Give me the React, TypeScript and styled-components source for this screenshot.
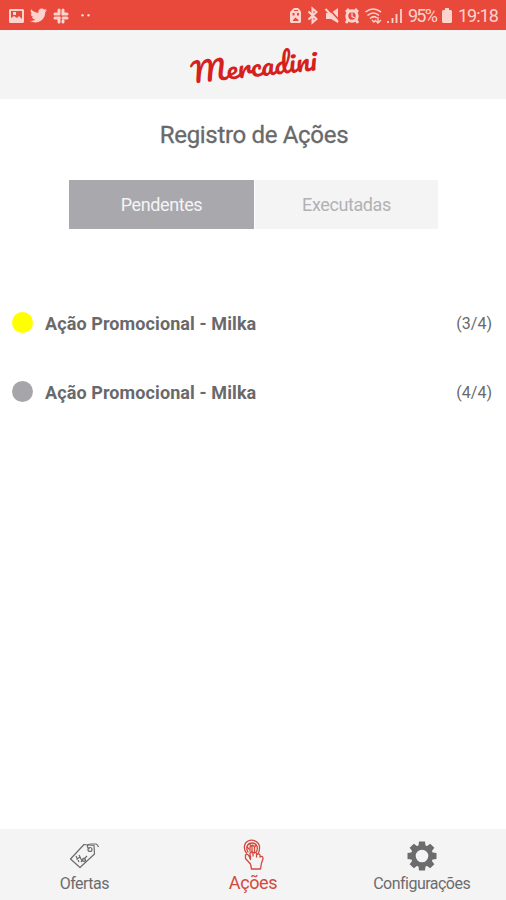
import React from "react";
import styled, { createGlobalStyle } from "styled-components";
import { FaTwitter } from "react-icons/fa";

const Global = createGlobalStyle`
  * { box-sizing: border-box; }
  body { margin: 0; background: #fff; }
`;

const Screen = styled.div`
  width: 506px;
  height: 900px;
  display: flex;
  flex-direction: column;
  background: #fff;
  color: #69696b;
  font-family: Roboto, "Liberation Sans", sans-serif;
  overflow: hidden;
`;

const StatusBar = styled.div`
  height: 30px;
  flex: none;
  display: flex;
  justify-content: space-between;
  background: #e8493b;
  color: #fcd3cd;
  padding: 0 9px;
`;

const StatusGroup = styled.div<{ $gap: number }>`
  display: flex;
  align-items: center;
  gap: ${(p) => p.$gap}px;
  padding-top: 1px;
  svg { display: block; flex: none; }
`;

const StatusText = styled.span<{ $width: number; $spacing: number }>`
  width: ${(p) => p.$width}px;
  font-size: 18px;
  line-height: 30px;
  padding-top: 1px;
  letter-spacing: ${(p) => p.$spacing}px;
  white-space: nowrap;
`;

const Header = styled.header`
  height: 69px;
  flex: none;
  display: flex;
  justify-content: center;
  background: #f4f4f4;
`;

const Title = styled.h1`
  margin: 22px 0 0;
  height: 28px;
  line-height: 28px;
  text-align: center;
  font-size: 24px;
  font-weight: 400;
  letter-spacing: -0.32px;
  padding-left: 2px;
  -webkit-text-stroke: 0.3px currentColor;
`;

const Segments = styled.div`
  width: 369px;
  height: 49px;
  margin: 31px 0 0 69px;
  display: grid;
  grid-template-columns: 185px 183px;
  gap: 1px;
`;

const Segment = styled.button<{ $active?: boolean }>`
  border: 0;
  padding: 0;
  background: ${(p) => (p.$active ? "#a9a8ac" : "#f4f4f4")};
  color: ${(p) => (p.$active ? "#f4f4f6" : "#b1b1b4")};
  font: 400 18px Roboto, sans-serif;
  letter-spacing: -0.4px;
`;

const List = styled.ul`
  list-style: none;
  margin: 60px 0 0;
  padding: 0 14px 0 12px;
  flex: 1;
`;

const Row = styled.li`
  height: 69px;
  display: flex;
  align-items: center;
`;

const Dot = styled.span<{ $color: string }>`
  width: 21px;
  height: 21px;
  margin: 0 12px 2px 0;
  border-radius: 50%;
  background: ${(p) => p.$color};
`;

const RowName = styled.span`
  flex: 1;
  font-size: 18px;
  font-weight: 700;
  letter-spacing: 0.1px;
`;

const RowCount = styled.span`
  font-size: 16px;
  letter-spacing: 0;
`;

const Nav = styled.nav`
  height: 71px;
  flex: none;
  display: grid;
  grid-template-columns: repeat(3, 1fr);
  background: #f4f4f4;
`;

const NavItem = styled.a<{ $active?: boolean }>`
  display: flex;
  flex-direction: column;
  align-items: center;
  padding-top: 10px;
  color: ${(p) => (p.$active ? "#d2493f" : "#6c6c6e")};
  font-size: ${(p) => (p.$active ? 18 : 16)}px;
  line-height: 20px;
  letter-spacing: ${(p) => (p.$active ? -0.35 : -0.52)}px;
  svg { display: block; height: 34px; }
  span { margin-top: ${(p) => (p.$active ? 0 : 1)}px; }
`;

const Logo = () => (
  <svg width="150" height="69" viewBox="178 30 150 69" role="img" aria-label="Mercadini" overflow="visible">
    <text
      x="192" y="83.500" transform="rotate(-6 192 83.500)" textLength="126" lengthAdjust="spacingAndGlyphs"
      fontFamily="Pacifico, Lobster, cursive" fontSize="27" fontWeight="400" fill="#d5211d"
    >
      Mercadini
    </text>
  </svg>
);

const PhotoIcon = () => (
  <svg width="15" height="14" viewBox="0 0 15 14">
    <path fill="currentColor" fillRule="evenodd" d="M1 0H14L15 1V13L14 14H1L0 13V1ZM2 2V9L5 7L8 9L10 7L13 10V2ZM4 3H7V6H4Z" />
  </svg>
);

const SlackIcon = () => (
  <svg width="16" height="16" viewBox="0 0 16 16" fill="none" stroke="currentColor" strokeWidth="3" strokeLinecap="round">
    <path d="M6 2V6M2 6H3M10 2V6H14M6 14V10H2M10 14V13M10 10H14M6 6H2" />
  </svg>
);

const MoreDots = () => (
  <svg width="16" height="4" viewBox="0 0 16 4" fill="currentColor">
    <circle cx="7.500" cy="1.200" r="1.200" /><circle cx="13.500" cy="1.200" r="1.200" />
  </svg>
);

const DeviceIcons = () => (
  <svg width="113" height="30" viewBox="289 1 113 30" fill="none" stroke="currentColor" strokeWidth="1.6">
    <path fill="currentColor" fillRule="evenodd" stroke="none" d="M292 10L294 8H298L300 10L301 12V22L300 23H291L290 22V12ZM294 10V11H298V10ZM292.500 13V15.500H294.500V13ZM297 13V15.500H299V13ZM293 20L295.500 17.500L298.500 20V21H293Z" />
    <path strokeWidth="2" d="M308.500 11.500L316.500 19L312.500 22.500V8.500L316.500 12L308.500 19.500" />
    <path fill="currentColor" stroke="none" d="M326 13H331L338 8V23L331 19H326Z" />
    <path stroke="#e8493b" strokeWidth="1.600" d="M328 8L340 21" />
    <path strokeWidth="2" d="M325.500 9L338 22" />
    <circle cx="352" cy="16" r="5.200" strokeWidth="3" />
    <path d="M346 12L349 9M355 9L358 12M348 20L346 23M356 20L358 23" strokeWidth="2.800" />
    <path d="M352 12.500V16.500L355 18" strokeWidth="1.300" />
    <path d="M365.500 12Q373 6 381 12M367.500 15.500Q373.500 10.500 379 15.500M370 18.500Q374 15 377 18" />
    <path d="M372 20L374 22L376 20M378 17V23M376 21L378 23L381 20" strokeWidth="1.300" />
    <path d="M388 21V23M392.500 18V23M396.500 14V23M401 9V23" strokeWidth="1.800" />
  </svg>
);

const BatteryIcon = () => (
  <svg width="10" height="15" viewBox="0 0 10 15">
    <path fill="currentColor" d="M3 0H7V2H9L10 3V14L9 15H1L0 14V3L1 2H3Z" />
  </svg>
);

const TagIcon = () => (
  <svg width="34" height="34" viewBox="67 839 34 34" fill="none" stroke="currentColor" strokeWidth="1.200" strokeLinejoin="round">
    <path d="M70.500 859L84 844.500L94 845.500L94.500 854L80 867.500Z" />
    <circle cx="90" cy="849.500" r="2" />
    <path d="M89.500 849C86 847 87 844 91 844H96Q98 845 98.500 847" />
    <path d="M76 856L79 862M79 855L82 861M76.500 859.500L80 857M83 858L86 861M81 862L87 856" />
    <circle cx="84" cy="860" r="1.500" />
  </svg>
);

const TouchIcon = () => (
  <svg width="34" height="34" viewBox="235 838 34 34" fill="none" stroke="currentColor" strokeWidth="1.300" strokeLinecap="round" strokeLinejoin="round">
    <path d="M245.500 852C242 848 243 842 247 840C252 837.500 259 841 258.500 847Q258.500 850 257.500 852" />
    <path d="M247 851C244.500 847 246 842 251 842C255.500 842 257.500 846 255.500 851M249 850V846Q251.500 842.500 253.500 846V852M251 845V852" />
    <path d="M249 855V852Q250.500 849.500 252 852V855V852Q254 850 255.500 852.500V856V854Q257.500 851.500 259 854V856Q262 854 262 858L260.500 862L259.500 868H250.500L249.500 863L244.500 857.500V854Q246.500 852 248 855L249.500 858.500V855" />
    <path d="M246 846L248 848M249 843.500L250 845M255 844L253.500 846" />
  </svg>
);

const GearIcon = () => (
  <svg width="34" height="34" viewBox="-17 -17 34 34" fill="currentColor">
    {[0, 45, 90, 135].map((angle) => (
      <g key={angle} transform={`rotate(${angle})`}>
        <path d="M-3 -14.500H3L3.700 -9H-3.700ZM-3 14.500H3L3.700 9H-3.700Z" />
      </g>
    ))}
    <circle r="8.700" fill="none" stroke="currentColor" strokeWidth="4.800" />
  </svg>
);

const items = [
  { color: "#ffff00", name: "Ação Promocional - Milka", count: "(3/4)" },
  { color: "#a6a5a9", name: "Ação Promocional - Milka", count: "(4/4)" },
];

export default function App() {
  return (
    <>
      <Global />
      <Screen>
        <StatusBar>
          <StatusGroup $gap={6}>
            <PhotoIcon />
            <FaTwitter size={17} />
            <SlackIcon />
            <MoreDots />
          </StatusGroup>
          <StatusGroup $gap={6}>
            <DeviceIcons />
            <StatusText $width={28} $spacing={-1.8}>95%</StatusText>
            <BatteryIcon />
            <StatusText $width={39} $spacing={-1}>19:18</StatusText>
          </StatusGroup>
        </StatusBar>
        <Header><Logo /></Header>
        <Title>Registro de Ações</Title>
        <Segments>
          <Segment $active>Pendentes</Segment>
          <Segment>Executadas</Segment>
        </Segments>
        <List>
          {items.map((item) => (
            <Row key={item.count}>
              <Dot $color={item.color} />
              <RowName>{item.name}</RowName>
              <RowCount>{item.count}</RowCount>
            </Row>
          ))}
        </List>
        <Nav>
          <NavItem><TagIcon /><span>Ofertas</span></NavItem>
          <NavItem $active><TouchIcon /><span>Ações</span></NavItem>
          <NavItem><GearIcon /><span>Configurações</span></NavItem>
        </Nav>
      </Screen>
    </>
  );
}
